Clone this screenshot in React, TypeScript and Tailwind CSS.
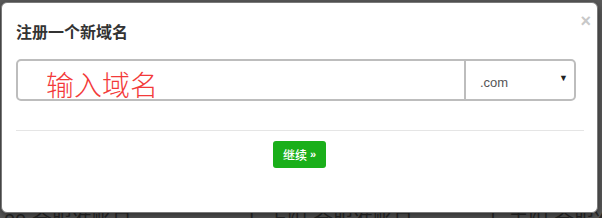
import React from "react";

export default function App() {
  return (
    <div
      className="relative w-[602px] h-[218px] overflow-hidden bg-[#5a5a5a]"
      style={{ fontFamily: '"Liberation Sans", "Noto Sans CJK SC", sans-serif' }}
    >
      {/* page behind the backdrop */}
      <div className="flex flex-col pt-[209px] pl-[4px]">
        <div className="flex gap-[30px] text-[20px] leading-[24px] text-[#2a2a2a] whitespace-nowrap">
          <span>00 合服准账日</span>
          <span className="ml-[80px]">丨 上阳 合服准账日</span>
          <span className="ml-[40px]">丨 去阳 合服准账日</span>
        </div>
      </div>

      {/* modal */}
      <div className="absolute left-[1px] top-[2px] w-[597px] h-[211px] bg-white rounded-[6px] border border-[#7a7a7a] shadow-[0_3px_9px_rgba(0,0,0,0.5)] flex flex-col">
        <div className="flex items-start justify-between pl-[14px] pr-[6px] pt-[19px]">
          <div className="text-[16px] leading-[22px] font-bold text-[#333]">注册一个新域名</div>
          <div className="text-[18px] leading-[18px] text-[#c8c8c8] mt-[-10px] font-bold">×</div>
        </div>
        <div className="flex pl-[14px] pr-[21px] mt-[15px]">
          <div className="flex w-full h-[42px] border-2 border-[#bdbdbd] rounded-[5px]">
            <div className="flex-1 flex items-end pl-[28px] overflow-visible">
              <span
                className="text-[28px] leading-[30px] text-[#f33a3a] translate-y-[0px]"
                style={{ fontFamily: '"Noto Sans CJK SC", sans-serif', fontWeight: 300 }}
              >
                输入域名
              </span>
            </div>
            <div className="w-[110px] border-l-2 border-[#bdbdbd] flex items-center justify-between pl-[14px] pr-[6px]">
              <span className="text-[13px] text-[#555] mt-[6px]">.com</span>
              <span className="text-[9px] text-[#222] mt-[-3px]">▼</span>
            </div>
          </div>
        </div>
        <div className="ml-[14px] mr-[13px] mt-[29px] border-t border-[#e5e5e5]" />
        <div className="flex justify-center mt-[10px]">
          <div className="flex items-center justify-center gap-[3px] w-[53px] h-[27px] rounded-[3px] bg-[#1aaf1a] text-white">
            <span className="text-[12px]" style={{ fontFamily: '"Noto Sans CJK SC", sans-serif', fontWeight: 500 }}>继续</span>
            <span className="text-[11px] font-bold">»</span>
          </div>
        </div>
      </div>
    </div>
  );
}
